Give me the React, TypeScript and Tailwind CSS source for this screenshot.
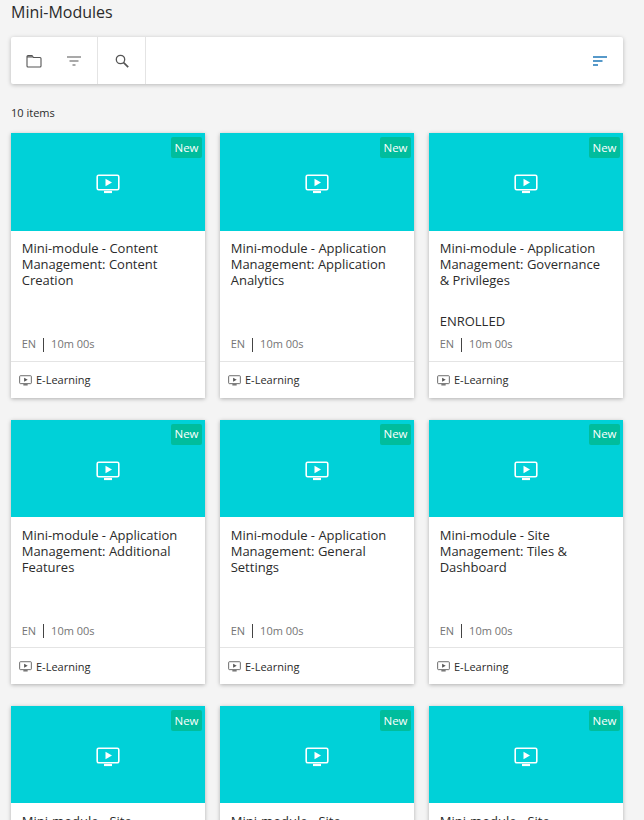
function PlayMonitor({ className }: { className: string }) {
  return (
    <svg viewBox="0 0 24 20" className={className} fill="none" stroke="currentColor">
      <rect x="1.2" y="1.2" width="21.6" height="14.6" rx="1.5" strokeWidth="1.6" />
      <path d="M9.5 4.8 L16 8.5 L9.5 12.2 Z" fill="currentColor" stroke="none" />
      <path d="M8 18 H16" strokeWidth="2.2" />
    </svg>
  );
}

type Item = { title: string; enrolled?: boolean };

const items: Item[] = [
  { title: "Mini-module - Content Management: Content Creation" },
  { title: "Mini-module - Application Management: Application Analytics" },
  { title: "Mini-module - Application Management: Governance & Privileges", enrolled: true },
  { title: "Mini-module - Application Management: Additional Features" },
  { title: "Mini-module - Application Management: General Settings" },
  { title: "Mini-module - Site Management: Tiles & Dashboard" },
  { title: "Mini-module - Site Management: Pages" },
  { title: "Mini-module - Site Management: Menus" },
  { title: "Mini-module - Site Management: Themes" },
];

function Card({ item }: { item: Item }) {
  return (
    <div className="flex h-[264.4px] flex-col bg-white shadow-[0_1px_4px_rgba(0,0,0,0.28)]">
      <div className="relative flex h-[97.4px] shrink-0 items-center justify-center bg-[#00d1d8] pt-[5px] text-white">
        <PlayMonitor className="h-[20px] w-[24px]" />
        <span className="absolute right-[3px] top-[4px] flex h-[21px] w-[31px] items-center justify-center rounded-[2px] bg-[#00bd9d] text-[11.5px] leading-none">
          New
        </span>
      </div>
      <div className="flex min-h-0 flex-1 flex-col pl-[10.7px] pr-[14px] pt-[9.7px]">
        <h3 className="text-[13px] font-medium leading-[16px] text-[#2b2b2b]">{item.title}</h3>
        <div className="mt-auto">
          {item.enrolled && (
            <div className="mb-[7px] text-[13px] font-medium leading-[19px] text-[#2b2b2b]">ENROLLED</div>
          )}
          <div className="mb-[9px] flex h-[14px] items-center text-[11px] text-[#757575]">
            <span>EN</span>
            <span className="mx-[7px] h-[14px] w-px bg-[#444444]" />
            <span>10m 00s</span>
          </div>
        </div>
      </div>
      <div className="flex h-[37px] shrink-0 items-center gap-[4px] border-t border-[#e4e4e4] pl-[8px] pt-[2px] text-[11px] font-medium text-[#2b2b2b]">
        <PlayMonitor className="h-[11px] w-[13px] text-[#555555]" />
        <span>E-Learning</span>
      </div>
    </div>
  );
}

export default function App() {
  return (
    <div className="h-[820px] overflow-hidden bg-[#f4f4f4] font-['Open_Sans',sans-serif]">
      <div className="pl-[11px] pr-[21px]">
        <h1 className="pt-[1px] text-[16px] font-medium leading-[22px] text-[#2b2b2b]">Mini-Modules</h1>
        <div className="mt-[14px] flex h-[47px] items-stretch rounded-[2px] bg-white shadow-[0_1px_4px_rgba(0,0,0,0.25)]">
          <div className="flex w-[87px] items-center justify-between border-r border-[#e4e4e4] pl-[15px] pr-[16px] text-[#555555]">
            <svg viewBox="0 0 16 14" className="h-[14px] w-[16px]" fill="none" stroke="currentColor" strokeWidth="1.1">
              <path d="M1 3.5 V12 a1 1 0 0 0 1 1 H14 a1 1 0 0 0 1-1 V4.5 a1 1 0 0 0-1-1 H7.5 L6 1.5 H2 a1 1 0 0 0-1 1 Z" />
              <path d="M1 2.2 H6 L7.2 3.5 H1 Z" fill="currentColor" stroke="none" />
            </svg>
            <svg viewBox="0 0 14 10" className="h-[10px] w-[14px]" fill="none" stroke="currentColor" strokeWidth="1.15">
              <path d="M0 1 H14 M2.5 5 H11.5 M5.5 9 H8.5" />
            </svg>
          </div>
          <div className="flex w-[48px] items-center justify-center border-r border-[#e4e4e4] text-[#555555]">
            <svg viewBox="0 0 14 14" className="h-[14px] w-[14px]" fill="none" stroke="currentColor" strokeWidth="1.3">
              <circle cx="5.5" cy="5.5" r="4.2" />
              <path d="M8.6 8.6 L13.2 13.2" strokeWidth="1.7" />
            </svg>
          </div>
          <div className="flex flex-1 items-center justify-end pr-[16px] text-[#1f78b8]">
            <svg viewBox="0 0 14 10" className="h-[10px] w-[14px]" fill="none" stroke="currentColor" strokeWidth="1.5">
              <path d="M0 1 H14 M0 5 H9.5 M0 9 H5" />
            </svg>
          </div>
        </div>
        <p className="mb-[12.2px] mt-[21px] text-[11px] leading-[16px] text-[#2b2b2b]">10 items</p>
        <div className="grid grid-cols-3 gap-x-[15px] gap-y-[22px]">
          {items.map((item) => (
            <Card key={item.title} item={item} />
          ))}
        </div>
      </div>
    </div>
  );
}
